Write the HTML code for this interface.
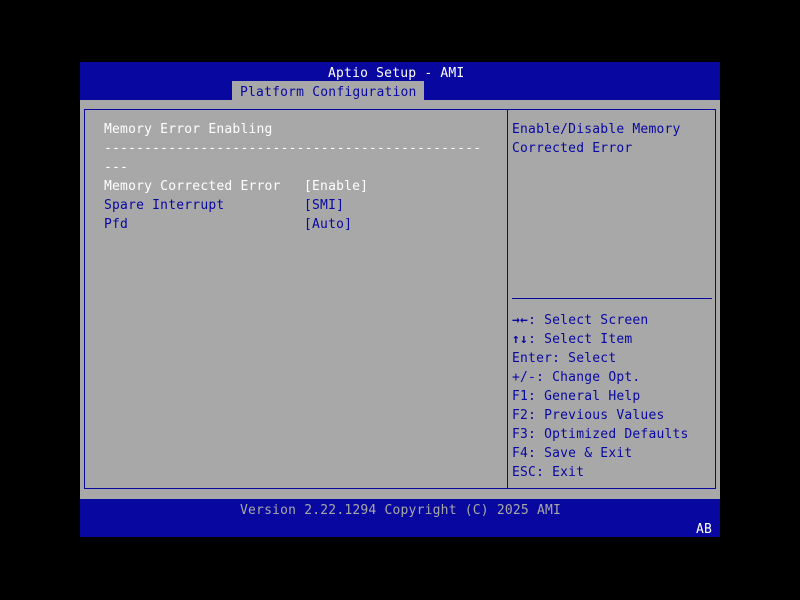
<!DOCTYPE html>
<html><head><style>
body{margin:0;width:800px;height:600px;background:#000;position:relative;overflow:hidden;font-family:"DejaVu Sans Mono","Liberation Mono",monospace;font-size:13px;}
div{position:absolute;}
.t{line-height:19px;height:19px;white-space:pre;letter-spacing:0.2px;margin-top:2px;}
.w{color:#fff}.b{color:#0808a0}
</style></head><body>
<div style="left:80px;top:62px;width:640px;height:38px;background:#0808a0"></div>
<div style="left:80px;top:100px;width:640px;height:399px;background:#a8a8a8"></div>
<div style="left:80px;top:499px;width:640px;height:38px;background:#0808a0"></div>
<div style="left:232px;top:81px;width:192px;height:19px;background:#a8a8a8"></div>
<div style="left:84px;top:109px;width:630px;height:378px;border:1px solid #0808a0"></div>
<div style="left:507px;top:109px;width:1px;height:380px;background:#0808a0"></div>
<div style="left:512px;top:298px;width:200px;height:1px;background:#0808a0"></div>
<div class="t w" style="left:328px;top:62px">Aptio Setup - AMI</div>
<div class="t b" style="left:240px;top:81px">Platform Configuration</div>
<div class="t w" style="left:104px;top:118px">Memory Error Enabling</div>
<div class="t w" style="left:104px;top:137px">-----------------------------------------------</div>
<div class="t w" style="left:104px;top:156px">---</div>
<div class="t w" style="left:104px;top:175px">Memory Corrected Error</div>
<div class="t w" style="left:304px;top:175px">[Enable]</div>
<div class="t b" style="left:104px;top:194px">Spare Interrupt</div>
<div class="t b" style="left:304px;top:194px">[SMI]</div>
<div class="t b" style="left:104px;top:213px">Pfd</div>
<div class="t b" style="left:304px;top:213px">[Auto]</div>
<div class="t b" style="left:512px;top:118px">Enable/Disable Memory</div>
<div class="t b" style="left:512px;top:137px">Corrected Error</div>
<div class="t b" style="left:512px;top:309px"><b>→←</b>: Select Screen</div>
<div class="t b" style="left:512px;top:328px"><b>↑↓</b>: Select Item</div>
<div class="t b" style="left:512px;top:347px">Enter: Select</div>
<div class="t b" style="left:512px;top:366px">+/-: Change Opt.</div>
<div class="t b" style="left:512px;top:385px">F1: General Help</div>
<div class="t b" style="left:512px;top:404px">F2: Previous Values</div>
<div class="t b" style="left:512px;top:423px">F3: Optimized Defaults</div>
<div class="t b" style="left:512px;top:442px">F4: Save &amp; Exit</div>
<div class="t b" style="left:512px;top:461px">ESC: Exit</div>
<div class="t" style="left:240px;top:499px;color:#a8a8a8">Version 2.22.1294 Copyright (C) 2025 AMI</div>
<div class="t w" style="left:696px;top:518px">AB</div>
</body></html>
